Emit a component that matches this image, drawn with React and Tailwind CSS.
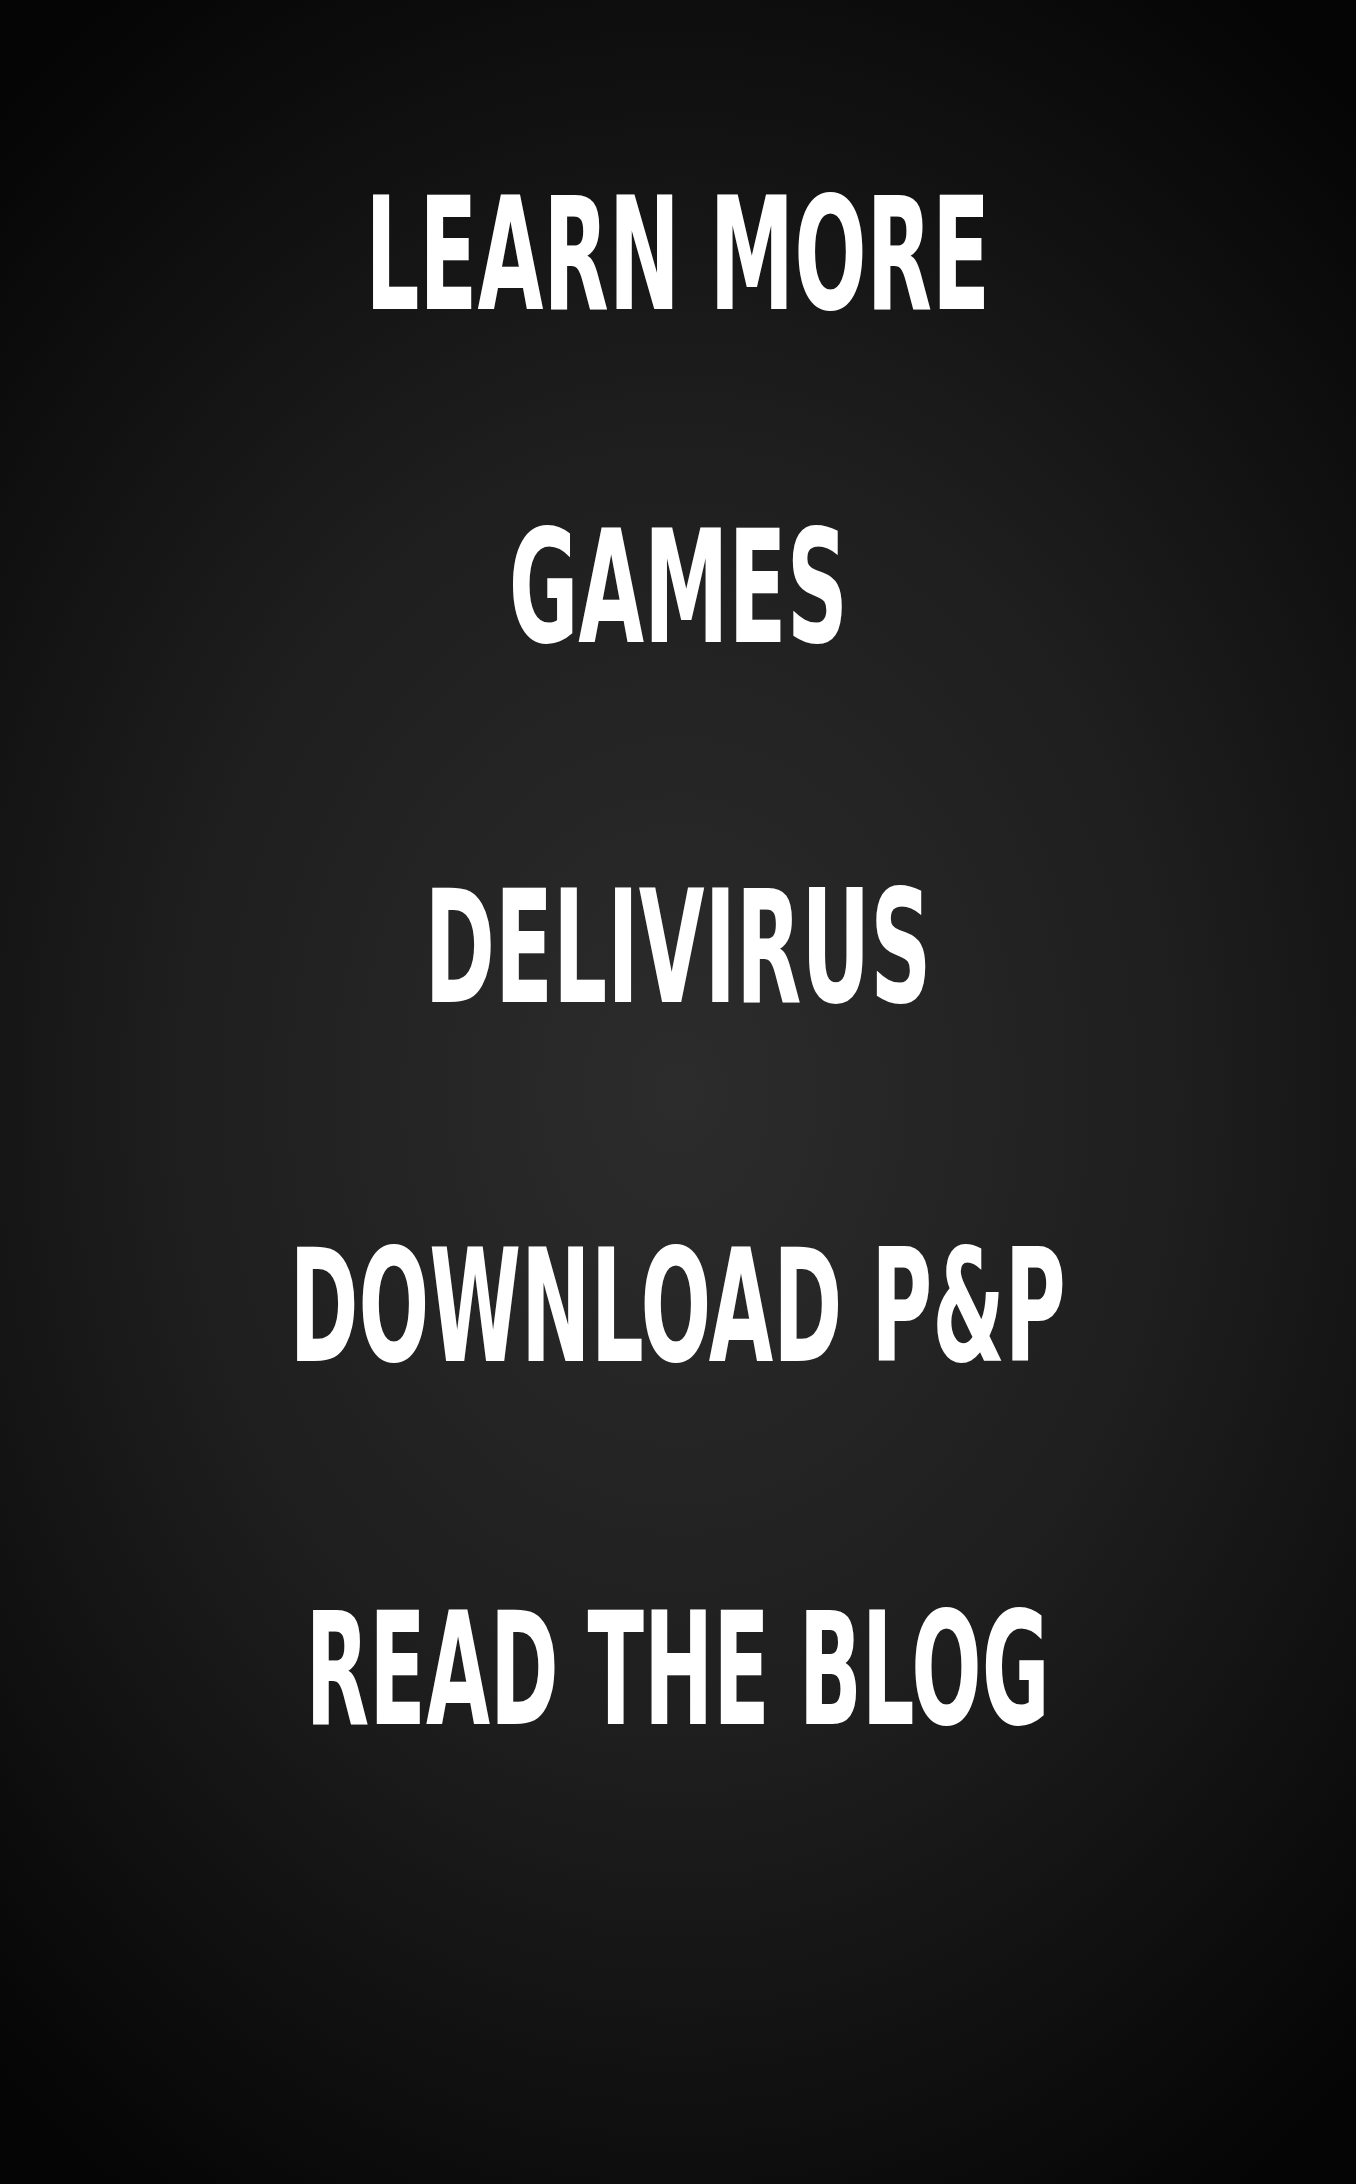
const links = [
  { label: "LEARN MORE", cls: "mt-[177px]", sx: "scale-x-[0.606]" },
  { label: "GAMES", cls: "mt-[177px]", sx: "scale-x-[0.605]" },
  { label: "DELIVIRUS", cls: "mt-[204px]", sx: "scale-x-[0.605]" },
  { label: "DOWNLOAD P&P", cls: "mt-[203px]", sx: "scale-x-[0.593]" },
  { label: "READ THE BLOG", cls: "mt-[207px]", sx: "scale-x-[0.59]" },
];

export default function App() {
  return (
    <div className="min-h-[2184px] w-full bg-black bg-[radial-gradient(ellipse_75%_60%_at_50%_50%,#2c2c2c_0%,#1e1e1e_50%,#050505_100%)] flex flex-col items-center">
      {links.map((l) => (
        <a
          key={l.label}
          href="#"
          className={`${l.cls} block h-[156px] text-[156px] leading-none font-bold text-white whitespace-nowrap font-['Liberation_Sans_Narrow','DejaVu_Sans_Condensed',sans-serif]`}
        >
          <span className={`inline-block origin-center ${l.sx}`}>{l.label}</span>
        </a>
      ))}
    </div>
  );
}
